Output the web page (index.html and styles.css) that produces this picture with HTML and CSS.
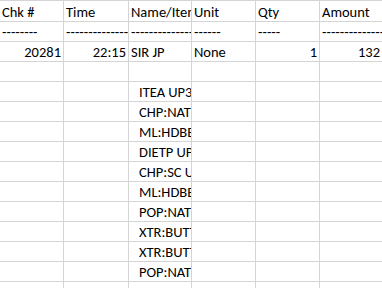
FILE: index.html
```html
<!DOCTYPE html>
<html>
<head>
<meta charset="utf-8">
<link rel="stylesheet" href="styles.css">
</head>
<body>
<div class="sheet">
  <div class="c">Chk #</div><div class="c">Time</div><div class="c">Name/Item</div><div class="c">Unit</div><div class="c">Qty</div><div class="c">Amount</div>
  <div class="c">--------</div><div class="c">---------------</div><div class="c">---------------</div><div class="c">------</div><div class="c">-----</div><div class="c">---------------</div>
  <div class="c r">20281</div><div class="c r">22:15</div><div class="c">SIR JP</div><div class="c">None</div><div class="c r">1</div><div class="c r">132</div>
  <div class="c"></div><div class="c"></div><div class="c"></div><div class="c"></div><div class="c"></div><div class="c"></div>
  <div class="c"></div><div class="c"></div><div class="c ind">ITEA UP3</div><div class="c"></div><div class="c"></div><div class="c"></div>
  <div class="c"></div><div class="c"></div><div class="c ind">CHP:NATURAL</div><div class="c"></div><div class="c"></div><div class="c"></div>
  <div class="c"></div><div class="c"></div><div class="c ind">ML:HDBEEF</div><div class="c"></div><div class="c"></div><div class="c"></div>
  <div class="c"></div><div class="c"></div><div class="c ind">DIETP UP</div><div class="c"></div><div class="c"></div><div class="c"></div>
  <div class="c"></div><div class="c"></div><div class="c ind">CHP:SC UP</div><div class="c"></div><div class="c"></div><div class="c"></div>
  <div class="c"></div><div class="c"></div><div class="c ind">ML:HDBEEF</div><div class="c"></div><div class="c"></div><div class="c"></div>
  <div class="c"></div><div class="c"></div><div class="c ind">POP:NATURAL</div><div class="c"></div><div class="c"></div><div class="c"></div>
  <div class="c"></div><div class="c"></div><div class="c ind">XTR:BUTTER</div><div class="c"></div><div class="c"></div><div class="c"></div>
  <div class="c"></div><div class="c"></div><div class="c ind">XTR:BUTTER</div><div class="c"></div><div class="c"></div><div class="c"></div>
  <div class="c"></div><div class="c"></div><div class="c ind">POP:NATURAL</div><div class="c"></div><div class="c"></div><div class="c"></div>
  <div class="c"></div><div class="c"></div><div class="c"></div><div class="c"></div><div class="c"></div><div class="c"></div>
</div>
</body>
</html>
```
FILE: styles.css
```css
html, body {
  margin: 0;
  padding: 0;
  background: #ffffff;
  overflow: hidden;
}
.sheet {
  display: grid;
  grid-template-columns: 63px 64px 62px 63px 63px 1fr;
  grid-template-rows: 20px;
  grid-auto-rows: 19px;
  gap: 1px;
  background: #d4d4d4;
  border-top: 1px solid #d4d4d4;
  font-family: "Carlito", "Lato", "Liberation Sans", sans-serif;
  font-size: 14.5px;
  color: #000000;
}
.c {
  background: #ffffff;
  overflow: hidden;
  white-space: nowrap;
  display: flex;
  align-items: flex-end;
  line-height: 17px;
  padding: 0 2px;
}
.r {
  justify-content: flex-end;
}
.ind {
  padding-left: 10px;
}
```
